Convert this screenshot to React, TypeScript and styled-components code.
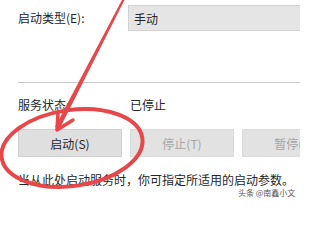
import React from "react";
import styled, { createGlobalStyle } from "styled-components";

const Global = createGlobalStyle`
  html, body { margin: 0; padding: 0; background: #fff; }
  body { font-family: "Noto Sans CJK SC", "Noto Sans", sans-serif; }
`;

const Dialog = styled.div`
  position: relative;
  width: 300px;
  height: 200px;
  overflow: hidden;
  background: #fff;
  color: #262626;
  font-size: 12px;
  display: flex;
  flex-direction: column;
  padding-left: 18px;
  box-sizing: border-box;
`;

const FieldRow = styled.div`
  display: grid;
  grid-template-columns: 110px 200px;
  align-items: center;
  margin-top: 5px;
  height: 26px;
`;

const Label = styled.span`
  line-height: 16px;
  white-space: nowrap;
`;

const SelectBox = styled.div`
  height: 26px;
  box-sizing: border-box;
  background: #e5e5e5;
  border: 1px solid #d2d2d2;
  display: flex;
  align-items: center;
  padding-left: 5px;
`;

const Divider = styled.div`
  margin-top: 51px;
  height: 1px;
  background: #c9c9c9;
  width: 300px;
`;

const StatusRow = styled.div`
  display: grid;
  grid-template-columns: 112px auto;
  align-items: center;
  height: 16px;
  margin-top: 14px;
`;

const ButtonRow = styled.div`
  display: flex;
  gap: 8px;
  margin-top: 16px;
`;

const Button = styled.div<{ $disabled?: boolean }>`
  flex: 0 0 104px;
  height: 28px;
  box-sizing: border-box;
  background: ${(p) => (p.$disabled ? "#e2e2e2" : "#dfdfdf")};
  border: 1px solid ${(p) => (p.$disabled ? "#dadada" : "#d0d0d0")};
  color: ${(p) => (p.$disabled ? "#a6a6a6" : "#262626")};
  display: flex;
  align-items: center;
  justify-content: center;
  white-space: nowrap;
`;

const Hint = styled.div`
  margin-top: 15px;
  line-height: 16px;
  white-space: nowrap;
`;

const Overlay = styled.svg`
  position: absolute;
  left: 0;
  top: 0;
  width: 300px;
  height: 200px;
  pointer-events: none;
`;

const Watermark = styled.div`
  position: absolute;
  left: 238px;
  top: 188px;
  font-size: 8px;
  line-height: 9px;
  color: #555;
  text-shadow: 0 0 2px #fff, 0 0 2px #fff;
  white-space: nowrap;
`;

export default function App() {
  return (
    <>
      <Global />
      <Dialog>
        <FieldRow>
          <Label>启动类型(E):</Label>
          <SelectBox>手动</SelectBox>
        </FieldRow>
        <Divider />
        <StatusRow>
          <Label>服务状态:</Label>
          <Label>已停止</Label>
        </StatusRow>
        <ButtonRow>
          <Button>启动(S)</Button>
          <Button $disabled>停止(T)</Button>
          <Button $disabled>暂停(P)</Button>
        </ButtonRow>
        <Hint>当从此处启动服务时，你可指定所适用的启动参数。</Hint>
        <Overlay viewBox="0 0 300 200">
          <polygon points="123,-2 125,-1 60,128 55,127" fill="#e8474a" />
          <polyline
            points="58,112 57,130 73,120"
            fill="none"
            stroke="#e8474a"
            strokeWidth="3.5"
            strokeLinecap="round"
            strokeLinejoin="round"
          />
          <ellipse
            cx="72"
            cy="148"
            rx="71"
            ry="38"
            transform="rotate(-8 72 148)"
            fill="none"
            stroke="#e8474a"
            strokeWidth="4"
          />
        </Overlay>
        <Watermark>头条 @南鑫小文</Watermark>
      </Dialog>
    </>
  );
}
